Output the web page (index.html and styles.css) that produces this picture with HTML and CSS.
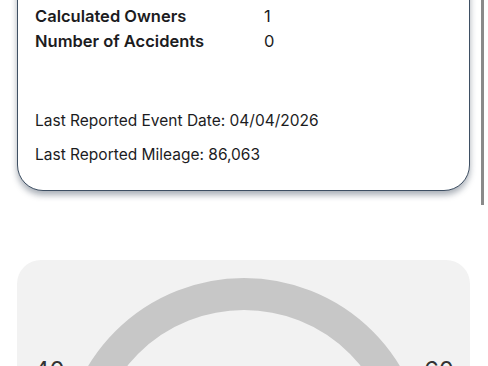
FILE: index.html
```html
<!DOCTYPE html>
<html lang="en">
<head>
    <meta charset="UTF-8">
    <meta name="viewport" content="width=device-width, initial-scale=1.0">
    <title>Vehicle History</title>
    <link rel="stylesheet" href="styles.css">
</head>
<body>
    <div class="page">
        <div class="report-card">
            <div class="stat-row">
                <span class="stat-label">Odometer Problems</span>
                <span class="stat-value">No</span>
            </div>
            <div class="stat-row">
                <span class="stat-label">Calculated Owners</span>
                <span class="stat-value">1</span>
            </div>
            <div class="stat-row">
                <span class="stat-label">Number of Accidents</span>
                <span class="stat-value">0</span>
            </div>

            <p class="last-reported first">Last Reported Event Date: 04/04/2026</p>
            <p class="last-reported">Last Reported Mileage: 86,063</p>
        </div>

        <div class="gauge-card">
            <svg class="gauge-arc" width="453" height="140" viewBox="0 0 453 140">
                <path d="M 61 200 A 166 166 0 0 1 393 200" fill="none" stroke="#c7c7c7" stroke-width="32"/>
            </svg>
            <div class="gauge-labels">
                <span>40</span>
                <span>60</span>
            </div>
        </div>
    </div>

    <div class="scrollbar"></div>
</body>
</html>
```

FILE: styles.css
```css
body {
    margin: 0;
    background-color: #fff;
    font-family: Inter, "Noto Sans", sans-serif;
    color: #1c1c1e;
    overflow: hidden;
}
.page {
    padding: 0 18px 0 17px;
}
.report-card {
    margin-top: -44px;
    padding: 21px 17px 18px;
    background-color: #fff;
    border: 1.5px solid #3e4f63;
    border-radius: 26px;
    box-shadow: 0 4px 6px rgba(40, 55, 75, 0.4);
}
.stat-row {
    display: flex;
    height: 25px;
    align-items: center;
}
.stat-label {
    width: 229px;
    font-size: 16.5px;
    font-weight: 600;
}
.stat-value {
    font-size: 16.5px;
}
.last-reported {
    margin: 0;
    font-size: 15.5px;
    line-height: 34px;
}
.last-reported.first {
    margin-top: 51px;
}
.gauge-card {
    display: grid;
    margin-top: 69px;
    height: 140px;
    background-color: #f2f2f2;
    border-radius: 24px;
}
.gauge-arc {
    grid-area: 1 / 1;
    display: block;
}
.gauge-labels {
    grid-area: 1 / 1;
    display: flex;
    justify-content: space-between;
    padding: 99px 16px 0 17px;
    font-size: 24px;
    line-height: 1;
    color: #333;
}
.scrollbar {
    position: fixed;
    top: 0;
    left: 481px;
    width: 3px;
    height: 205px;
    background-color: #8a8a8a;
}
```
